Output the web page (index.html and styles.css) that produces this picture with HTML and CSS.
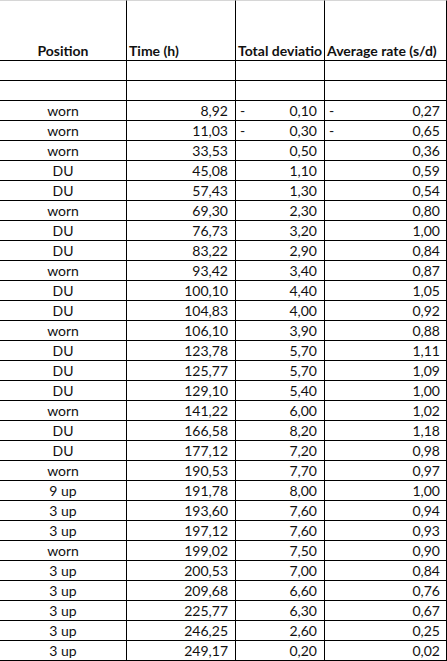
FILE: index.html
```html
<!DOCTYPE html>
<html>
<head>
<meta charset="utf-8">
<link rel="stylesheet" href="styles.css">
</head>
<body>
<div class="sheet">
  <div class="cell head center">Position</div>
  <div class="cell head left">Time (h)</div>
  <div class="cell head left">Total deviatio</div>
  <div class="cell head left">Average rate (s/d)</div>

  <div class="cell"></div><div class="cell"></div><div class="cell"></div><div class="cell"></div>
  <div class="cell"></div><div class="cell"></div><div class="cell"></div><div class="cell"></div>

  <div class="cell center">worn</div><div class="cell num">8,92</div><div class="cell acc"><span class="dash">-</span><span>0,10</span></div><div class="cell acc last"><span class="dash">-</span><span>0,27</span></div>
  <div class="cell center">worn</div><div class="cell num">11,03</div><div class="cell acc"><span class="dash">-</span><span>0,30</span></div><div class="cell acc last"><span class="dash">-</span><span>0,65</span></div>
  <div class="cell center">worn</div><div class="cell num">33,53</div><div class="cell num">0,50</div><div class="cell num last">0,36</div>
  <div class="cell center">DU</div><div class="cell num">45,08</div><div class="cell num">1,10</div><div class="cell num last">0,59</div>
  <div class="cell center">DU</div><div class="cell num">57,43</div><div class="cell num">1,30</div><div class="cell num last">0,54</div>
  <div class="cell center">worn</div><div class="cell num">69,30</div><div class="cell num">2,30</div><div class="cell num last">0,80</div>
  <div class="cell center">DU</div><div class="cell num">76,73</div><div class="cell num">3,20</div><div class="cell num last">1,00</div>
  <div class="cell center">DU</div><div class="cell num">83,22</div><div class="cell num">2,90</div><div class="cell num last">0,84</div>
  <div class="cell center">worn</div><div class="cell num">93,42</div><div class="cell num">3,40</div><div class="cell num last">0,87</div>
  <div class="cell center">DU</div><div class="cell num">100,10</div><div class="cell num">4,40</div><div class="cell num last">1,05</div>
  <div class="cell center">DU</div><div class="cell num">104,83</div><div class="cell num">4,00</div><div class="cell num last">0,92</div>
  <div class="cell center">worn</div><div class="cell num">106,10</div><div class="cell num">3,90</div><div class="cell num last">0,88</div>
  <div class="cell center">DU</div><div class="cell num">123,78</div><div class="cell num">5,70</div><div class="cell num last">1,11</div>
  <div class="cell center">DU</div><div class="cell num">125,77</div><div class="cell num">5,70</div><div class="cell num last">1,09</div>
  <div class="cell center">DU</div><div class="cell num">129,10</div><div class="cell num">5,40</div><div class="cell num last">1,00</div>
  <div class="cell center">worn</div><div class="cell num">141,22</div><div class="cell num">6,00</div><div class="cell num last">1,02</div>
  <div class="cell center">DU</div><div class="cell num">166,58</div><div class="cell num">8,20</div><div class="cell num last">1,18</div>
  <div class="cell center">DU</div><div class="cell num">177,12</div><div class="cell num">7,20</div><div class="cell num last">0,98</div>
  <div class="cell center">worn</div><div class="cell num">190,53</div><div class="cell num">7,70</div><div class="cell num last">0,97</div>
  <div class="cell center">9 up</div><div class="cell num">191,78</div><div class="cell num">8,00</div><div class="cell num last">1,00</div>
  <div class="cell center">3 up</div><div class="cell num">193,60</div><div class="cell num">7,60</div><div class="cell num last">0,94</div>
  <div class="cell center">3 up</div><div class="cell num">197,12</div><div class="cell num">7,60</div><div class="cell num last">0,93</div>
  <div class="cell center">worn</div><div class="cell num">199,02</div><div class="cell num">7,50</div><div class="cell num last">0,90</div>
  <div class="cell center">3 up</div><div class="cell num">200,53</div><div class="cell num">7,00</div><div class="cell num last">0,84</div>
  <div class="cell center">3 up</div><div class="cell num">209,68</div><div class="cell num">6,60</div><div class="cell num last">0,76</div>
  <div class="cell center">3 up</div><div class="cell num">225,77</div><div class="cell num">6,30</div><div class="cell num last">0,67</div>
  <div class="cell center">3 up</div><div class="cell num">246,25</div><div class="cell num">2,60</div><div class="cell num last">0,25</div>
  <div class="cell center">3 up</div><div class="cell num">249,17</div><div class="cell num">0,20</div><div class="cell num last">0,02</div>
</div>
</body>
</html>
```
FILE: styles.css
```css
html, body {
  margin: 0;
  padding: 0;
  background: #ffffff;
}

.sheet {
  display: grid;
  grid-template-columns: 127px 109px 89px 122px;
  grid-template-rows: 61px;
  grid-auto-rows: 20px;
  font-family: Lato, "Liberation Sans", Arial, sans-serif;
  font-size: 14px;
  color: #111111;
}

.cell {
  box-sizing: border-box;
  height: 20px;
  border-right: 1px solid #000000;
  border-bottom: 1px solid #000000;
  display: flex;
  align-items: flex-end;
  line-height: 16px;
  padding-bottom: 1px;
  white-space: nowrap;
  overflow: hidden;
}

.head {
  height: 61px;
  border-top: 1px solid #d6d6d6;
  font-weight: bold;
}

.center {
  justify-content: center;
}

.left {
  justify-content: flex-start;
  padding-left: 2px;
}

.num {
  justify-content: flex-end;
  padding-right: 7px;
}

.acc {
  justify-content: space-between;
  padding-left: 4px;
  padding-right: 7px;
}

.last {
  padding-right: 6px;
}
```
